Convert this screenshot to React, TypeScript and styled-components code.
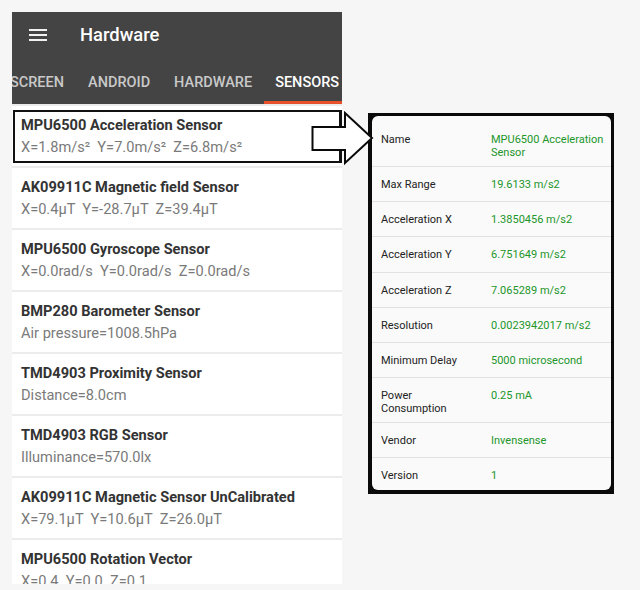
import React from 'react';
import styled, { createGlobalStyle } from 'styled-components';

const GlobalStyle = createGlobalStyle`
  html, body {
    margin: 0;
    padding: 0;
    background: #f6f6f6;
    font-family: Roboto, "Liberation Sans", sans-serif;
  }
`;

type Sensor = { name: string; value: string };
type Detail = { label: string; value: string };

const sensors: Sensor[] = [
  { name: 'MPU6500 Acceleration Sensor', value: 'X=1.8m/s²  Y=7.0m/s²  Z=6.8m/s²' },
  { name: 'AK09911C Magnetic field Sensor', value: 'X=0.4μT  Y=-28.7μT  Z=39.4μT' },
  { name: 'MPU6500 Gyroscope Sensor', value: 'X=0.0rad/s  Y=0.0rad/s  Z=0.0rad/s' },
  { name: 'BMP280 Barometer Sensor', value: 'Air pressure=1008.5hPa' },
  { name: 'TMD4903 Proximity Sensor', value: 'Distance=8.0cm' },
  { name: 'TMD4903 RGB Sensor', value: 'Illuminance=570.0lx' },
  { name: 'AK09911C Magnetic Sensor UnCalibrated', value: 'X=79.1μT  Y=10.6μT  Z=26.0μT' },
  { name: 'MPU6500 Rotation Vector', value: 'X=0.4  Y=0.0  Z=0.1' },
];

const details: Detail[] = [
  { label: 'Name', value: 'MPU6500 Acceleration Sensor' },
  { label: 'Max Range', value: '19.6133 m/s2' },
  { label: 'Acceleration X', value: '1.3850456 m/s2' },
  { label: 'Acceleration Y', value: '6.751649 m/s2' },
  { label: 'Acceleration Z', value: '7.065289 m/s2' },
  { label: 'Resolution', value: '0.0023942017 m/s2' },
  { label: 'Minimum Delay', value: '5000 microsecond' },
  { label: 'Power Consumption', value: '0.25 mA' },
  { label: 'Vendor', value: 'Invensense' },
  { label: 'Version', value: '1' },
];

const tabs = ['SCREEN', 'ANDROID', 'HARDWARE', 'SENSORS'];

const Page = styled.div`
  position: relative;
  display: flex;
  align-items: flex-start;
  padding: 12px 0 0 12px;
`;

const Phone = styled.div`
  width: 330px;
  height: 572px;
  overflow: hidden;
  background: #ececec;
  display: flex;
  flex-direction: column;
`;

const AppBar = styled.div`
  background: #444444;
  color: #ffffff;
`;

const TitleRow = styled.div`
  height: 46px;
  display: flex;
  align-items: center;
`;

const Menu = styled.div`
  width: 18px;
  margin: -1px 33px 0 17px;
  display: flex;
  flex-direction: column;
  gap: 3px;
  span {
    display: block;
    height: 2px;
    background: #f2f2f2;
  }
`;

const Title = styled.div`
  font-size: 18.4px;
  font-weight: 500;
  margin-top: -1px;
`;

const TabStrip = styled.div`
  height: 46px;
  display: flex;
  margin-left: -14px;
`;

const Tab = styled.div<{ $active?: boolean }>`
  padding: 5px 12px 0 ${({ $active }) => ($active ? '11px' : '12px')};
  display: flex;
  align-items: center;
  font-size: 14.5px;
  font-weight: 500;
  white-space: nowrap;
  color: ${({ $active }) => ($active ? '#ffffff' : '#c9c9c9')};
  border-bottom: 3px solid ${({ $active }) => ($active ? '#e8522a' : 'transparent')};
`;

const List = styled.div`
  display: flex;
  flex-direction: column;
  gap: 2px;
  padding-top: 2px;
`;

const Item = styled.div<{ $selected?: boolean }>`
  position: relative;
  height: 60px;
  flex-shrink: 0;
  box-sizing: border-box;
  background: #ffffff;
  padding: 10px 9px 0;
  ${({ $selected }) =>
    $selected &&
    `
    &::after {
      content: '';
      position: absolute;
      left: 1px;
      right: 0;
      top: 4px;
      bottom: 3px;
      border: 2px solid #111;
      border-right-width: 3px;
    }
  `}
`;

const ItemName = styled.div`
  font-size: 14.6px;
  line-height: 18px;
  font-weight: 700;
  color: #333333;
`;

const ItemValue = styled.div`
  margin-top: 4px;
  font-size: 14.6px;
  line-height: 18px;
  color: #7a7a7a;
  white-space: pre;
`;

const Arrow = styled.svg`
  position: absolute;
  left: 311px;
  top: 111px;
`;

const Panel = styled.div`
  margin: 101px 0 0 26px;
  width: 239px;
  border: solid #0a0a0a;
  border-width: 3px 3px 4px 4px;
  background: #0a0a0a;
`;

const Card = styled.div`
  background: #fafafa;
  border-radius: 6px;
  padding-top: 6px;
  height: 374px;
  box-sizing: border-box;
`;

const Row = styled.div`
  display: flex;
  align-items: flex-start;
  min-height: 35.2px;
  box-sizing: border-box;
  padding: 11px 6px 7px 9px;
  font-size: 11px;
  line-height: 13px;
  & + & {
    border-top: 1px solid #e2e2e2;
  }
`;

const Label = styled.div`
  width: 110px;
  flex-shrink: 0;
  color: #222222;
  padding-right: 20px;
  box-sizing: border-box;
`;

const Value = styled.div`
  color: #22962a;
`;

export default function App() {
  return (
    <>
      <GlobalStyle />
      <Page>
        <Phone>
          <AppBar>
            <TitleRow>
              <Menu>
                <span />
                <span />
                <span />
              </Menu>
              <Title>Hardware</Title>
            </TitleRow>
            <TabStrip>
              {tabs.map((t) => (
                <Tab key={t} $active={t === 'SENSORS'}>
                  {t}
                </Tab>
              ))}
            </TabStrip>
          </AppBar>
          <List>
            {sensors.map((s, i) => (
              <Item key={s.name} $selected={i === 0}>
                <ItemName>{s.name}</ItemName>
                <ItemValue>{s.value}</ItemValue>
              </Item>
            ))}
          </List>
        </Phone>
        <Panel>
          <Card>
            {details.map((d) => (
              <Row key={d.label}>
                <Label>{d.label}</Label>
                <Value>{d.value}</Value>
              </Row>
            ))}
          </Card>
        </Panel>
        <Arrow width="64" height="56" viewBox="0 0 64 56">
          <path
            d="M1.5 16 H34 V2 L61 27 L34 52 V39 H1.5 Z"
            fill="#ffffff"
            stroke="#0a0a0a"
            strokeWidth="2"
            strokeLinejoin="miter"
          />
        </Arrow>
      </Page>
    </>
  );
}
